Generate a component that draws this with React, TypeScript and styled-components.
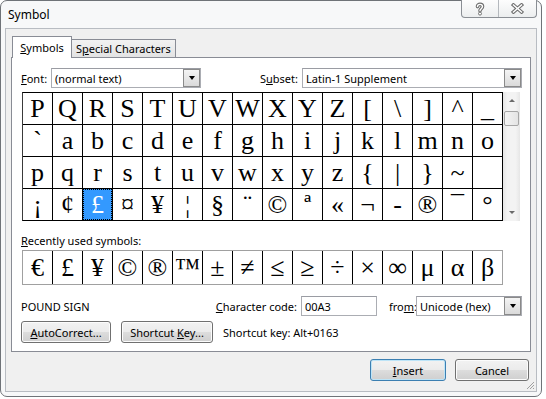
import styled, { createGlobalStyle, css } from "styled-components";

const GlobalStyle = createGlobalStyle`
  html, body { margin: 0; padding: 0; background: #ffffff; }
  body {
    font-family: "Noto Sans", "Open Sans", Arial, sans-serif;
    font-size: 11px;
    color: #000;
  }
  * { box-sizing: border-box; }
`;

const SYMBOLS = [
  "P", "Q", "R", "S", "T", "U", "V", "W", "X", "Y", "Z", "[", "\\", "]", "^", "_",
  "`", "a", "b", "c", "d", "e", "f", "g", "h", "i", "j", "k", "l", "m", "n", "o",
  "p", "q", "r", "s", "t", "u", "v", "w", "x", "y", "z", "{", "|", "}", "~", "",
  "¡", "¢", "£", "¤", "¥", "¦", "§", "¨", "©", "ª", "«", "¬", "-", "®", "¯", "°",
];

const RECENT = ["€", "£", "¥", "©", "®", "™", "±", "≠", "≤", "≥", "÷", "×", "∞", "μ", "α", "β"];

const Window = styled.div`
  width: 542px;
  height: 397px;
  border: 1px solid #6f7378;
  border-radius: 7px;
  background: #f7f8f9;
  padding: 0 4px 4px 4px;
  display: flex;
  flex-direction: column;
`;

const TitleBar = styled.div`
  height: 27px;
  display: flex;
  align-items: flex-start;
`;

const Title = styled.div`
  font-size: 12px;
  padding: 5px 0 0 3px;
`;

const CaptionButtons = styled.div`
  margin-left: auto;
  margin-top: -1px;
  display: flex;
  height: 18px;
  border: 1px solid #8a8e94;
  border-top: none;
  border-radius: 0 0 4px 4px;
  background: linear-gradient(#fdfdfd, #eceeef);
  overflow: hidden;
`;

const CaptionButton = styled.div<{ $divider?: boolean }>`
  width: 37px;
  display: flex;
  align-items: center;
  justify-content: center;
  ${(p) => p.$divider && css`border-right: 1px solid #b4b8bd;`}
`;

const Client = styled.div`
  flex: 1;
  position: relative;
  border: 1px solid #b8bcc2;
  background: #f0f0f0;
  display: flex;
  flex-direction: column;
`;

const Tabs = styled.div`
  display: flex;
  align-items: flex-end;
  margin: 6px 0 0 6px;
  height: 22px;
`;

const Tab = styled.div<{ $active?: boolean }>`
  position: relative;
  padding: 0 4px;
  border: 1px solid #898c95;
  border-bottom: none;
  display: flex;
  align-items: center;
  ${(p) =>
    p.$active
      ? css`
          height: 22px;
          margin-bottom: -1px;
          z-index: 1;
          background: #fff;
          width: 60px;
          justify-content: center;
        `
      : css`
          height: 18px;
          border-left: none;
          background: linear-gradient(#f2f2f2, #e3e3e3);
        `}
`;

const Panel = styled.div`
  margin: 0 5px;
  border: 1px solid #898c95;
  background: #fff;
  padding: 10px 8px 8px 9px;
  display: flex;
  flex-direction: column;
`;

const Row = styled.div<{ $mt?: number; $h?: number }>`
  display: flex;
  align-items: center;
  margin-top: ${(p) => p.$mt ?? 0}px;
  height: ${(p) => p.$h ?? 20}px;
`;

const FieldLabel = styled.div<{ $w?: number; $right?: boolean; $ml?: number }>`
  ${(p) => p.$w && css`width: ${p.$w}px;`}
  ${(p) => p.$right && css`text-align: right; padding-right: 4px;`}
  ${(p) => p.$ml && css`margin-left: ${p.$ml}px;`}
  white-space: nowrap;
`;

const Group = styled.div`
  margin-left: auto;
  display: flex;
  align-items: center;
`;

const Combo = styled.div<{ $w: number }>`
  width: ${(p) => p.$w}px;
  height: 20px;
  border: 1px solid #abadb3;
  border-top-color: #9a9ca3;
  background: #fff;
  display: flex;
  align-items: center;
  padding-left: 3px;
`;

const TextBox = styled.div<{ $w: number }>`
  width: ${(p) => p.$w}px;
  height: 20px;
  border: 1px solid #abadb3;
  border-top-color: #9a9ca3;
  background: #fff;
  display: flex;
  align-items: center;
  padding-left: 3px;
`;

const DropButton = styled.div`
  margin-left: auto;
  width: 17px;
  height: 18px;
  border: 1px solid #8a8a8a;
  background: linear-gradient(#f4f4f4, #dadada);
  display: flex;
  align-items: center;
  justify-content: center;
`;

const DownTriangle = styled.span`
  width: 0;
  height: 0;
  border-left: 3.5px solid transparent;
  border-right: 3.5px solid transparent;
  border-top: 4px solid #000;
`;

const SymbolArea = styled.div`
  display: flex;
  margin-top: 4px;
  margin-left: 1px;
`;

const SymbolGrid = styled.div`
  display: grid;
  grid-template-columns: repeat(16, 29px);
  grid-auto-rows: 31px;
  gap: 1px;
  background: #000;
  border: 1px solid #000;
  border-left-color: #3a3a3a;
`;

const Cell = styled.div<{ $selected?: boolean }>`
  background: ${(p) => (p.$selected ? "#3399ff" : "#fff")};
  color: ${(p) => (p.$selected ? "#fff" : "#000")};
  font-family: "Liberation Serif", "Times New Roman", serif;
  font-size: 26px;
  line-height: 1;
  display: flex;
  align-items: center;
  justify-content: center;
  ${(p) =>
    p.$selected &&
    css`
      outline: 1px dotted #000;
      outline-offset: -1px;
    `}
`;

const ScrollBar = styled.div`
  width: 17px;
  height: 129px;
  background: linear-gradient(90deg, #e6e6e6, #f3f3f3 25%, #f3f3f3 75%, #e6e6e6);
  display: flex;
  flex-direction: column;
  align-items: center;
`;

const ScrollArrow = styled.div<{ $down?: boolean }>`
  height: 17px;
  width: 17px;
  display: flex;
  align-items: center;
  justify-content: center;
  ${(p) => p.$down && css`margin-top: auto;`}
  &::after {
    content: "";
    width: 0;
    height: 0;
    border-left: 3px solid transparent;
    border-right: 3px solid transparent;
    ${(p) =>
      p.$down
        ? css`border-top: 3px solid #6a6a6a;`
        : css`border-bottom: 3px solid #6a6a6a;`}
  }
`;

const Thumb = styled.div`
  width: 15px;
  height: 15px;
  margin-top: 2px;
  border: 1px solid #a6a6a6;
  border-radius: 2px;
  background: linear-gradient(90deg, #f4f4f4, #e4e4e4);
`;

const SectionLabel = styled.div`
  margin-top: 13px;
  height: 14px;
  line-height: 14px;
  margin-bottom: 2px;
`;

const RecentRow = styled.div`
  display: flex;
  margin-left: 1px;
  border: 1px solid #a0a0a0;
  width: 481px;
  height: 35px;
`;

const RecentCell = styled.div`
  width: 30px;
  border-left: 1px solid #000;
  font-family: "Liberation Serif", "Times New Roman", serif;
  font-size: 26px;
  display: flex;
  align-items: center;
  justify-content: center;
  &:first-child {
    width: 29px;
    border-left: none;
  }
`;

const CharName = styled.div`
  flex: 1;
  white-space: nowrap;
`;

const Button = styled.div<{ $w: number; $default?: boolean }>`
  width: ${(p) => p.$w}px;
  height: 22px;
  border: 1px solid #707070;
  border-radius: 3px;
  background: linear-gradient(#f2f2f2, #ebebeb 50%, #dddddd 50%, #cfcfcf);
  box-shadow: inset 0 0 0 1px #fcfcfc;
  display: flex;
  align-items: center;
  justify-content: center;
  white-space: nowrap;
  ${(p) =>
    p.$default &&
    css`
      border-color: #3c7fb1;
      box-shadow: inset 0 0 0 1px #bde4f7;
    `}
`;

const ButtonRow = styled.div`
  display: flex;
  align-items: center;
  gap: 10px;
  margin-top: 5px;
`;

const Footer = styled.div`
  display: flex;
  justify-content: flex-end;
  gap: 9px;
  padding: 7px 7px 0 0;
`;

const Grip = styled.svg`
  position: absolute;
  right: 1px;
  bottom: 1px;
`;

const U = styled.span`
  text-decoration: underline;
  text-underline-offset: 1px;
`;

const HelpIcon = () => (
  <svg width="12" height="14" viewBox="0 0 12 14">
    <g fill="none" strokeLinecap="round" strokeLinejoin="round">
      <path d="M3.5 4.6C3.5 1.6 8.5 1.6 8.5 4.6C8.5 6.6 6 6.8 6 8.8" stroke="#707070" strokeWidth="3.6" />
      <path d="M3.5 4.6C3.5 1.6 8.5 1.6 8.5 4.6C8.5 6.6 6 6.8 6 8.8" stroke="#fff" strokeWidth="1.4" />
    </g>
    <circle cx="6" cy="11.6" r="1.5" fill="#fff" stroke="#707070" strokeWidth="1" />
  </svg>
);

const CloseIcon = () => (
  <svg width="13" height="11" viewBox="0 0 13 11">
    <g fill="none" strokeLinecap="square">
      <path d="M2.5 2L10.5 9M10.5 2L2.5 9" stroke="#707070" strokeWidth="3.6" />
      <path d="M2.5 2L10.5 9M10.5 2L2.5 9" stroke="#fff" strokeWidth="1.5" />
    </g>
  </svg>
);

const Arrow = () => (
  <DropButton>
    <DownTriangle />
  </DropButton>
);

export default function App() {
  return (
    <>
      <GlobalStyle />
      <Window>
        <TitleBar>
          <Title>Symbol</Title>
          <CaptionButtons>
            <CaptionButton $divider>
              <HelpIcon />
            </CaptionButton>
            <CaptionButton>
              <CloseIcon />
            </CaptionButton>
          </CaptionButtons>
        </TitleBar>
        <Client>
          <Tabs>
            <Tab $active>
              <span>
                <U>S</U>ymbols
              </span>
            </Tab>
            <Tab>
              <span>
                S<U>p</U>ecial Characters
              </span>
            </Tab>
          </Tabs>
          <Panel>
            <Row>
              <FieldLabel $w={30}>
                <U>F</U>ont:
              </FieldLabel>
              <Combo $w={150}>
                (normal text)
                <Arrow />
              </Combo>
              <Group>
                <FieldLabel $right>
                  S<U>u</U>bset:
                </FieldLabel>
                <Combo $w={220}>
                  Latin-1 Supplement
                  <Arrow />
                </Combo>
              </Group>
            </Row>
            <SymbolArea>
              <SymbolGrid>
                {SYMBOLS.map((s, i) => (
                  <Cell key={i} $selected={s === "£"}>
                    {s}
                  </Cell>
                ))}
              </SymbolGrid>
              <ScrollBar>
                <ScrollArrow />
                <Thumb />
                <ScrollArrow $down />
              </ScrollBar>
            </SymbolArea>
            <SectionLabel>
              <U>R</U>ecently used symbols:
            </SectionLabel>
            <RecentRow>
              {RECENT.map((s) => (
                <RecentCell key={s}>{s}</RecentCell>
              ))}
            </RecentRow>
            <Row $mt={11}>
              <CharName>POUND SIGN</CharName>
              <FieldLabel $right>
                <U>C</U>haracter code:
              </FieldLabel>
              <TextBox $w={76}>00A3</TextBox>
              <FieldLabel $w={27} $ml={12}>
                fro<U>m</U>:
              </FieldLabel>
              <Combo $w={106}>
                Unicode (hex)
                <Arrow />
              </Combo>
            </Row>
            <ButtonRow>
              <Button $w={90}>
                <span>
                  <U>A</U>utoCorrect...
                </span>
              </Button>
              <Button $w={92}>
                <span>
                  Shortcut <U>K</U>ey...
                </span>
              </Button>
              <span>Shortcut key: Alt+0163</span>
            </ButtonRow>
          </Panel>
          <Footer>
            <Button $w={76} $default>
              <span>
                <U>I</U>nsert
              </span>
            </Button>
            <Button $w={74}>Cancel</Button>
          </Footer>
          <Grip width="10" height="10" viewBox="0 0 10 10">
            <path d="M9 2L2 9M9 5L5 9M9 8L8 9" stroke="#a0a0a0" strokeWidth="1" />
          </Grip>
        </Client>
      </Window>
    </>
  );
}
